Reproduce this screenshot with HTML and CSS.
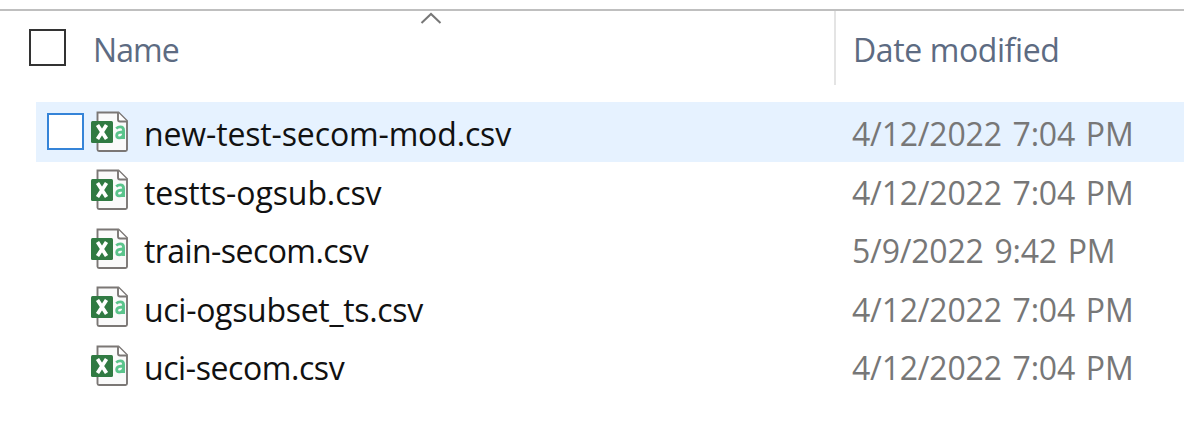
FILE: index.html
```html
<!DOCTYPE html>
<html lang="en">
<head>
<meta charset="utf-8">
<title>Files</title>
<link rel="stylesheet" href="styles.css">
</head>
<body>
<svg class="defs" aria-hidden="true">
  <symbol id="csv" viewBox="0 0 38 42">
    <path d="M6.500 1.500H27.500L36 10V38.500Q36 40 34.500 40H8Q6.500 40 6.500 38.500Z" fill="#fafafa" stroke="#7b7775" stroke-width="1.900"/>
    <path d="M27 1.500V8.500Q27 10.500 29 10.500H36" fill="#fff" stroke="#7b7775" stroke-width="1.900"/>
    <rect x="0" y="10" width="22" height="22" rx="1.500" fill="#307a42"/>
    <path d="M6.500 14L15.500 28M15.500 14L6.500 28" stroke="#fff" stroke-width="3.700"/>
    <path d="M25.200 17.500Q27 15.900 29.300 15.900Q32.600 15.900 32.600 19.400V28M32.600 20.700L28.600 21.400Q25.700 22 25.700 24.500Q25.700 26.900 28.100 26.900Q32.600 26.900 32.600 21.700" fill="none" stroke="#5bc48c" stroke-width="2.800"/>
  </symbol>
</svg>
<main class="list">
  <header class="head">
    <span class="box"></span>
    <span class="col name">Name</span>
    <svg class="sort" viewBox="0 0 22 13"><path d="M1.500 11L11 2L20.500 11" fill="none" stroke="#777" stroke-width="2"/></svg>
    <span class="col modified">Date modified</span>
  </header>
  <section class="rows">
    <div class="row active"><span class="box pick"></span><svg class="icon"><use href="#csv"/></svg><span class="file f1">new-test-secom-mod.csv</span><span class="date">4/12/2022 7:04 PM</span></div>
    <div class="row"><span class="box pick"></span><svg class="icon"><use href="#csv"/></svg><span class="file f2">testts-ogsub.csv</span><span class="date">4/12/2022 7:04 PM</span></div>
    <div class="row"><span class="box pick"></span><svg class="icon"><use href="#csv"/></svg><span class="file f3">train-secom.csv</span><span class="date">5/9/2022 9:42 PM</span></div>
    <div class="row"><span class="box pick"></span><svg class="icon"><use href="#csv"/></svg><span class="file f4">uci-ogsubset_ts.csv</span><span class="date">4/12/2022 7:04 PM</span></div>
    <div class="row"><span class="box pick"></span><svg class="icon"><use href="#csv"/></svg><span class="file f5">uci-secom.csv</span><span class="date">4/12/2022 7:04 PM</span></div>
  </section>
</main>
</body>
</html>
```
FILE: styles.css
```css
* { box-sizing: border-box; }
body {
  margin: 0;
  background: #fff;
  font: 400 32px/40px "Open Sans", "Noto Sans", sans-serif;
  color: #111;
  overflow: hidden;
}
.defs { display: block; width: 0; height: 0; }
.list { padding-top: 9px; height: 426px; }
.head {
  position: relative;
  display: flex;
  height: 76px;
  border-top: 2px solid #bfbfbf;
  color: #5d6b82;
}
.box {
  flex: none;
  width: 37px;
  height: 37px;
  margin: 18px 0 0 29px;
  border: 2px solid #333;
  background: #fff;
}
.col { white-space: nowrap; padding-top: 19px; }
.name { width: 768px; padding-left: 27px; letter-spacing: -.9px; }
.modified { flex: 1; border-left: 2px solid #e4e4e4; padding-left: 17px; letter-spacing: -.4px; }
.sort { position: absolute; left: 420px; top: 1px; width: 22px; height: 13px; }
.rows { padding: 17px 0 0 36px; }
.row { display: flex; height: 58.5px; white-space: nowrap; }
.active { height: 60px; margin-bottom: -1.5px; background: #e6f2ff; }
.pick { margin: 11px 0 0 11px; border-color: #3584d8; visibility: hidden; }
.active .pick { visibility: visible; }
.icon { flex: none; width: 38px; height: 42px; margin: 8.500px 0 0 7px; }
.file { width: 708px; margin-left: 15px; padding-top: 12px; }
.f1 { letter-spacing: -.14px; }
.f2 { letter-spacing: -.1px; }
.f3 { letter-spacing: -.57px; }
.f4 { letter-spacing: -.3px; }
.f5 { letter-spacing: -.42px; }
.date { padding-top: 12px; color: #777; letter-spacing: -.2px; word-spacing: 2.7px; }
```
